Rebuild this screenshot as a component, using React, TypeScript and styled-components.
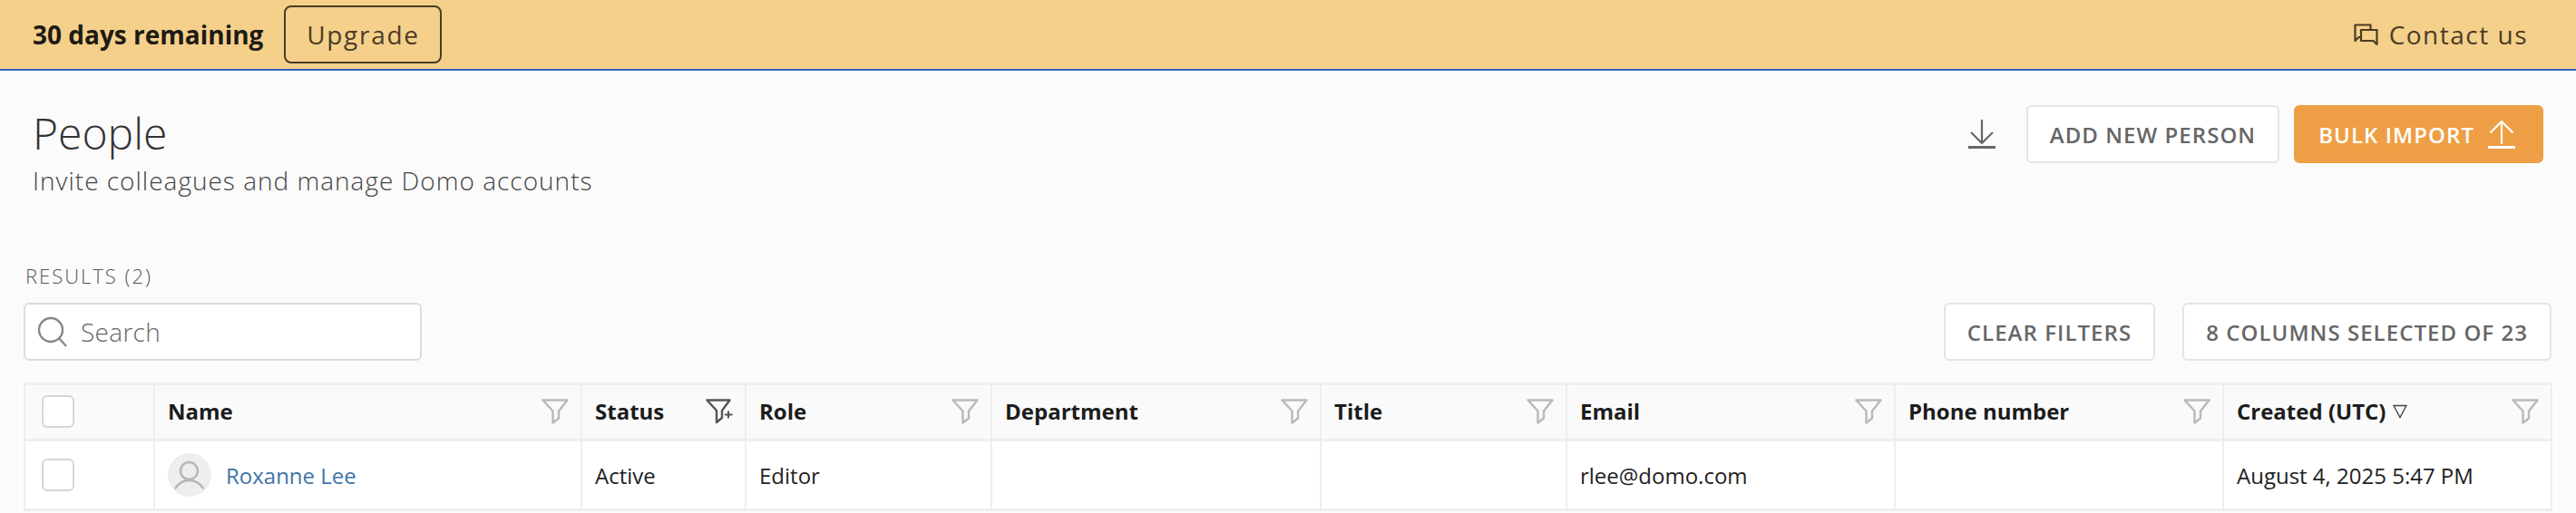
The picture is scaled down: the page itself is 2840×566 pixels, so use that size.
import React from "react";
import styled, { createGlobalStyle } from "styled-components";

const Global = createGlobalStyle`
  html, body { margin: 0; padding: 0; height: 566px; overflow: hidden; background: #fbfbfb; }
  * { box-sizing: border-box; }
  body { font-family: "Open Sans", "Noto Sans", sans-serif; }
`;

const Banner = styled.div`
  height: 78px;
  background: #f5d08b;
  border-bottom: 2px solid #2a62c4;
  display: flex;
  align-items: center;
  padding: 0 53px 0 36px;
`;
const Remaining = styled.span`
  font-size: 28px;
  font-weight: 700;
  color: #1e1b14;
`;
const UpgradeButton = styled.button`
  margin-left: 23px;
  width: 174px;
  height: 64px;
  border: 2px solid #4a3c26;
  border-radius: 8px;
  background: transparent;
  font: 400 28px "Open Sans", sans-serif;
  letter-spacing: 1.7px;
  color: #4a3c26;
`;
const Contact = styled.div`
  margin-left: auto;
  display: flex;
  align-items: center;
  gap: 12px;
  font-size: 28px;
  letter-spacing: 1.5px;
  color: #4a3c26;
`;

const PageHead = styled.header`
  display: flex;
  justify-content: space-between;
  align-items: flex-start;
  padding: 37px 36px 0 36px;
`;
const Title = styled.h1`
  margin: 0;
  font-size: 48px;
  line-height: 64px;
  font-weight: 300;
  color: #333;
`;
const Subtitle = styled.p`
  margin: 0;
  font-size: 28px;
  line-height: 40px;
  font-weight: 300;
  letter-spacing: 1px;
  color: #444;
`;
const Actions = styled.div`
  display: flex;
  align-items: center;
  padding-top: 1px;
`;
const IconButton = styled.div`
  display: flex;
  margin-right: 34px;
`;
const Button = styled.button<{ $primary?: boolean }>`
  height: 64px;
  display: flex;
  align-items: center;
  justify-content: center;
  gap: 15px;
  padding: ${(p) => (p.$primary ? "0 29px 0 25px" : "0 24px")};
  border-radius: 6px;
  border: 2px solid ${(p) => (p.$primary ? "#ee9f45" : "#e4e4e4")};
  background: ${(p) => (p.$primary ? "#ee9f45" : "#fff")};
  color: ${(p) => (p.$primary ? "#fff" : "#666")};
  font: 600 24px "Open Sans", sans-serif;
  letter-spacing: 1.05px;
  margin-left: ${(p) => (p.$primary ? "16px" : "0")};
`;

const Results = styled.section`
  margin-top: 70px;
  padding: 0 27px 0 26px;
`;
const Count = styled.div`
  margin-left: 2px;
  font-size: 22px;
  line-height: 30px;
  font-weight: 300;
  letter-spacing: 2px;
  color: #555;
`;
const Toolbar = styled.div`
  margin-top: 15px;
  display: flex;
  align-items: center;
  justify-content: space-between;
`;
const SearchBox = styled.div`
  width: 439px;
  height: 64px;
  display: flex;
  align-items: center;
  gap: 14px;
  padding-left: 13px;
  background: #fff;
  border: 2px solid #dcdcdc;
  border-radius: 6px;
  font-size: 28px;
  font-weight: 300;
  letter-spacing: 0.3px;
  color: #666;
`;
const ToolButtons = styled.div`
  display: flex;
  gap: 30px;
`;

const Table = styled.div`
  margin-top: 24px;
  display: grid;
  grid-template-columns: 143px 471px 181px 271px 363px 271px 362px 362px 362px;
  border-top: 3px solid #eee;
  border-left: 2px solid #eee;
`;
const HeadCell = styled.div`
  height: 62px;
  display: flex;
  align-items: center;
  justify-content: space-between;
  padding: 0 13px 2px 14px;
  background: #fafafa;
  border-right: 2px solid #eee;
  border-bottom: 3px solid #eee;
  font-size: 24px;
  font-weight: 700;
  color: #1c1c1c;
`;
const HeadLabel = styled.span`
  display: flex;
  align-items: center;
  gap: 8px;
`;
const Cell = styled.div`
  height: 77px;
  display: flex;
  align-items: center;
  gap: 16px;
  padding: 0 14px;
  background: #fff;
  border-right: 2px solid #eee;
  border-bottom: 3px solid #eee;
  font-size: 24px;
  font-weight: 400;
  color: #222;
`;
const Check = styled.span`
  width: 36px;
  height: 36px;
  margin-left: 4px;
  background: #fff;
  border: 2px solid #d6d6d6;
  border-radius: 6px;
`;
const Avatar = styled.span`
  width: 48px;
  height: 48px;
  flex: none;
  display: flex;
  border-radius: 50%;
  background: #eee;
`;
const NameLink = styled.a`
  color: #3f73a6;
`;

const Funnel = ({ active }: { active?: boolean }) => (
  <svg width="30" height="28" viewBox="0 0 30 28" fill="none" stroke={active ? "#555" : "#b9b9b9"} strokeWidth="2.4" strokeLinejoin="round">
    {active ? (
      <>
        <path d="M1.5 1.5h25L18 13v8l-6 5V13Z" />
        <path d="M21 17.5h8.5M25 13.5v8" strokeWidth="2" />
      </>
    ) : (
      <path d="M1.5 1.5h27L19 13.5v8l-6.5 5V13.5Z" />
    )}
  </svg>
);

const columns = ["Name", "Status", "Role", "Department", "Title", "Email", "Phone number"];

export default function App() {
  return (
    <>
      <Global />
      <Banner>
        <Remaining>30 days remaining</Remaining>
        <UpgradeButton>Upgrade</UpgradeButton>
        <Contact>
          <svg width="27" height="25" viewBox="0 0 27 25" fill="none" stroke="#4a3c26" strokeWidth="2.2" strokeLinejoin="round">
            <path d="M7 15H5.5L1.5 19V1.5h17V7" />
            <path d="M8 7h17.5v16l-4-4H8Z" />
          </svg>
          Contact us
        </Contact>
      </Banner>
      <PageHead>
        <div>
          <Title>People</Title>
          <Subtitle>Invite colleagues and manage Domo accounts</Subtitle>
        </div>
        <Actions>
          <IconButton>
            <svg width="30" height="32" viewBox="0 0 30 32" fill="none" stroke="#666" strokeWidth="2.2">
              <path d="M15 0v26M3 14l12 12 12-12" />
              <path d="M0 30.5h30" strokeWidth="3" />
            </svg>
          </IconButton>
          <Button>ADD NEW PERSON</Button>
          <Button $primary>
            BULK IMPORT
            <svg width="30" height="32" viewBox="0 0 30 32" fill="none" stroke="#fff" strokeWidth="2.2">
              <path d="M15 27V2M2.5 14.5 15 2l12.5 12.5" />
              <path d="M0 30.5h30" strokeWidth="3" />
            </svg>
          </Button>
        </Actions>
      </PageHead>
      <Results>
        <Count>RESULTS (2)</Count>
        <Toolbar>
          <SearchBox>
            <svg width="34" height="34" viewBox="0 0 34 34" fill="none" stroke="#888" strokeWidth="2.4">
              <circle cx="15" cy="15" r="13" />
              <path d="M24 24l8 9" />
            </svg>
            Search
          </SearchBox>
          <ToolButtons>
            <Button>CLEAR FILTERS</Button>
            <Button>8 COLUMNS SELECTED OF 23</Button>
          </ToolButtons>
        </Toolbar>
        <Table>
          <HeadCell><Check /></HeadCell>
          {columns.map((c) => (
            <HeadCell key={c}>
              {c}
              <Funnel active={c === "Status"} />
            </HeadCell>
          ))}
          <HeadCell>
            <HeadLabel>
              Created (UTC)
              <svg width="16" height="16" viewBox="0 0 16 16" fill="none" stroke="#444" strokeWidth="1.4">
                <path d="M1 1.5h14L8 14.5Z" />
              </svg>
            </HeadLabel>
            <Funnel />
          </HeadCell>

          <Cell><Check /></Cell>
          <Cell>
            <Avatar>
              <svg width="48" height="48" viewBox="0 0 48 48" fill="none" stroke="#b5b5b5" strokeWidth="2.4" strokeLinecap="round">
                <circle cx="23.5" cy="19.5" r="9.5" />
                <path d="M8.5 38.5C12 33 18 30 23.5 30S35 33 39 38.5" />
              </svg>
            </Avatar>
            <NameLink>Roxanne Lee</NameLink>
          </Cell>
          <Cell>Active</Cell>
          <Cell>Editor</Cell>
          <Cell />
          <Cell />
          <Cell>rlee@domo.com</Cell>
          <Cell />
          <Cell>August 4, 2025 5:47 PM</Cell>
        </Table>
      </Results>
    </>
  );
}
